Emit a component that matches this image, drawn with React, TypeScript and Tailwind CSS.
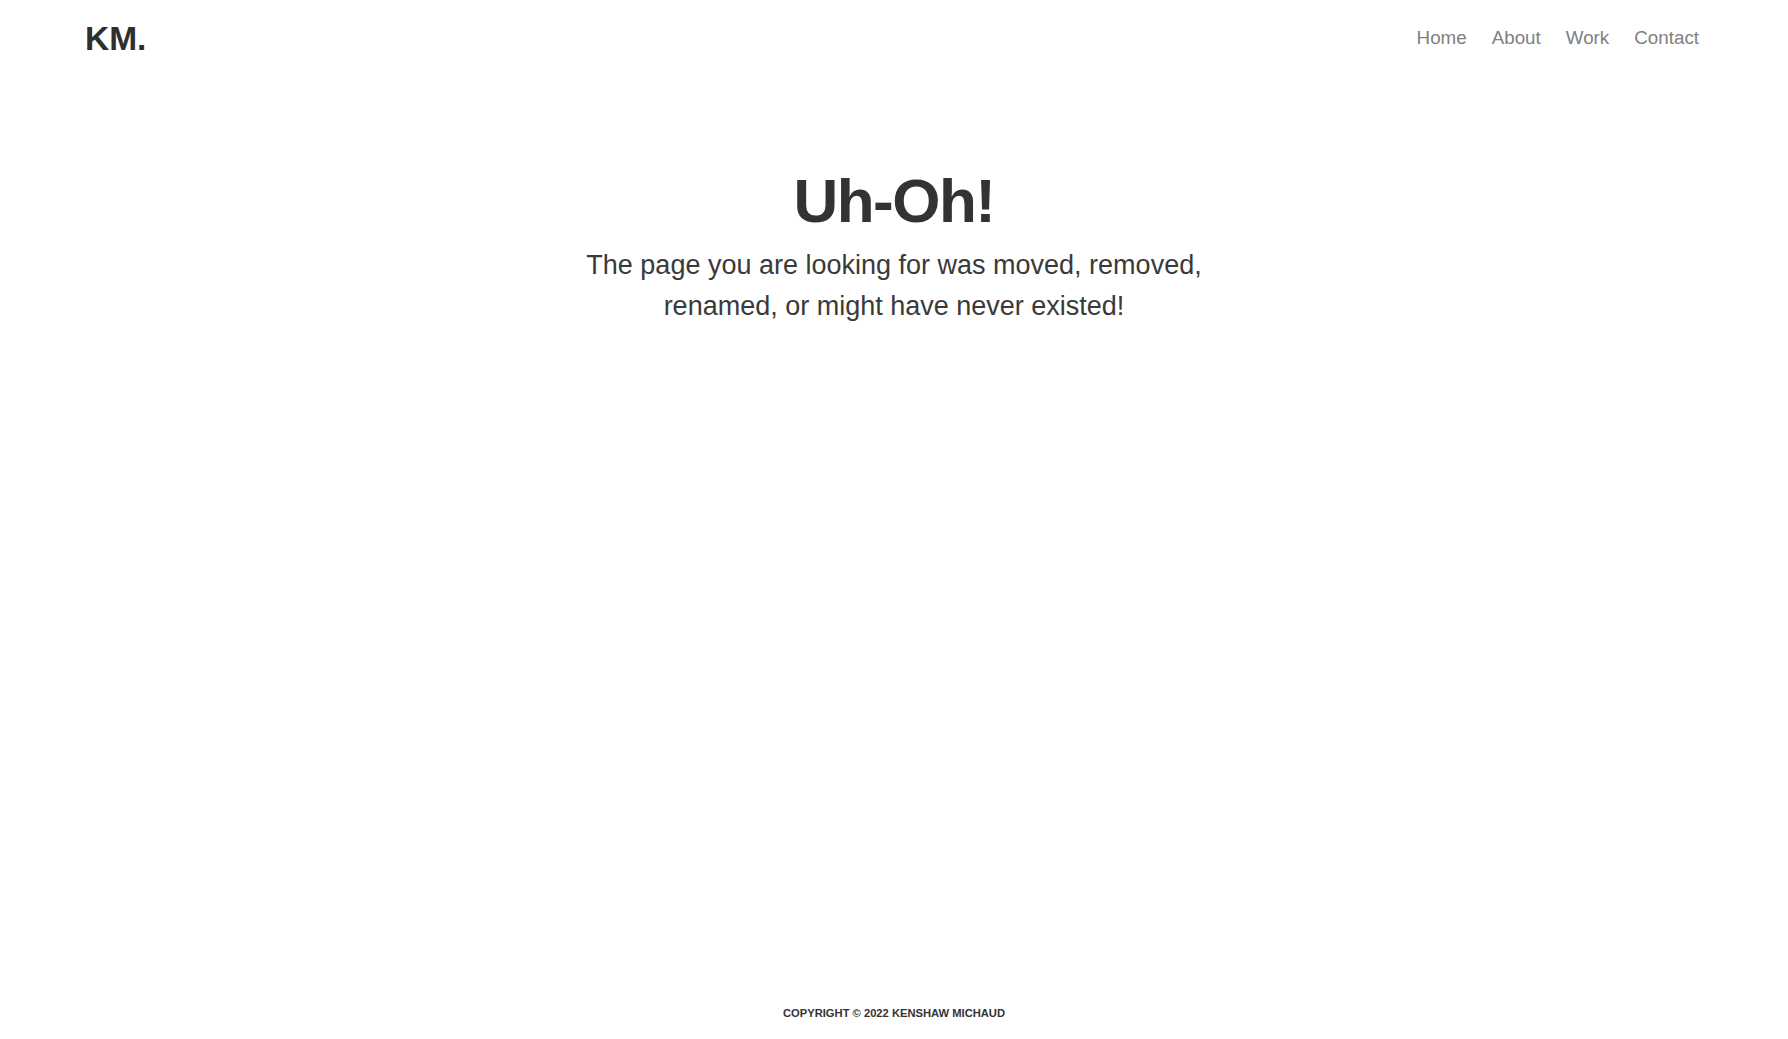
export default function App() {
  const links = ["Home", "About", "Work", "Contact"];

  return (
    <div className="min-h-screen flex flex-col bg-white text-[#333] font-['Liberation_Sans',Arial,sans-serif]">
      {/* Header */}
      <header className="h-[77px] flex items-center justify-between pl-[85px] pr-[89px]">
        <a href="#" className="text-[33.5px] font-bold leading-none text-[#2f2f2f]">
          KM.
        </a>
        <nav className="flex items-center gap-[25px]">
          {links.map((link) => (
            <a key={link} href="#" className="text-[18.8px] text-[#808080] hover:text-[#333]">
              {link}
            </a>
          ))}
        </nav>
      </header>

      {/* 404 */}
      <main className="flex-1 flex flex-col items-center pt-[87px] text-center">
        <h1 className="text-[62px] font-bold leading-[1.2] tracking-[-1.5px] text-[#333]">Uh-Oh!</h1>
        <p className="mt-[7px] max-w-[660px] text-[27px] leading-[41px] text-[#3a3a3a]">
          The page you are looking for was moved, removed, renamed, or might have never existed!
        </p>
      </main>

      <footer className="pb-[17px] text-center">
        <p className="text-[11.2px] font-bold uppercase text-[#333]">Copyright © 2022 Kenshaw Michaud</p>
      </footer>
    </div>
  );
}
